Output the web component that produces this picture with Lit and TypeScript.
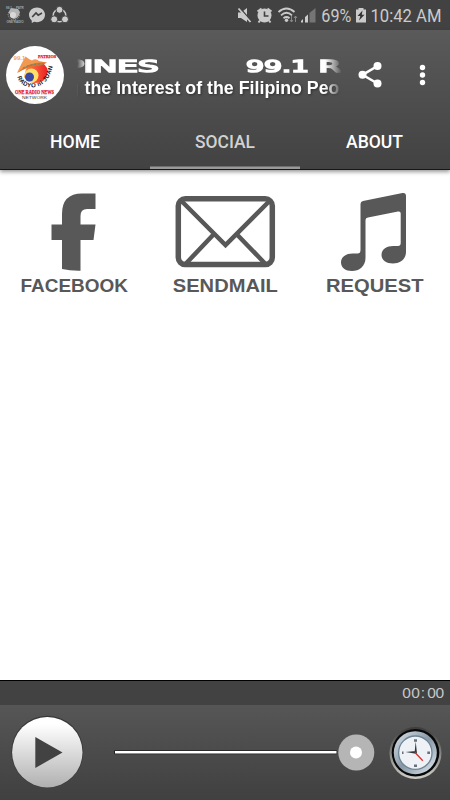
import { LitElement, html, css, svg } from "lit";
import { customElement, state } from "lit/decorators.js";
import { classMap } from "lit/directives/class-map.js";

const fitted = (cls: string, text: string, x: number, y: number, width: number) =>
  svg`<text class=${cls} x=${x} y=${y} textLength=${width} lengthAdjust="spacingAndGlyphs">${text}</text>`;

@customElement("status-bar")
class StatusBar extends LitElement {
  static styles = css`
    :host { display: block; height: 30px; background: #424242; }
    svg { display: block; }
    .label { font: 400 18.5px Roboto, sans-serif; fill: #cbcbcb; }
    .tiny { font: 700 3px "Liberation Sans", sans-serif; fill: #aaa; }
  `;
  render() {
    return html`<svg width="450" height="30" viewBox="0 0 450 30" fill="#cbcbcb">
      <g fill="#b4b4b4">
        <path d="M8 13 L11 8 L18 9 L20 12 Q19 18 14 19 Q9 18 10 14Z" />
        <circle cx="13" cy="15" r="3" fill="#d8d8d8" />
        <path d="M8 14 Q9 20 14 20 Q19 19 20 14" fill="none" stroke="#999" stroke-width="1" stroke-dasharray="1.2 .8" />
        <text class="tiny" x="6" y="8.5">99.1</text><text class="tiny" x="16" y="8.5">PATR</text>
        <text class="tiny" x="6.5" y="22.5">ONE RADIO</text>
      </g>
      <path d="M37 7.5 C32.5 7.5 29 10.6 29 14.8 C29 17 30 19 31.7 20.4 L31.8 23 L34.2 21.8 C35 22 36 22.2 37 22.2 C41.5 22.2 45 19 45 14.8 C45 10.6 41.5 7.5 37 7.5Z" />
      <path d="M32.2 17 L36 13 L38.2 15.2 L42 13" fill="none" stroke="#424242" stroke-width="1.7" />
      <circle cx="59.5" cy="15.5" r="6.3" fill="none" stroke="#cbcbcb" stroke-width="1.5" />
      <g stroke="#424242" stroke-width="1">
        <circle cx="59.5" cy="9.8" r="3.5" /><circle cx="54.2" cy="19.3" r="3.5" /><circle cx="65" cy="19.3" r="3.5" />
      </g>
      <path d="M238 12.5 H241 L247 8 V22 L241 18 H238Z" />
      <path d="M240 8 L251.500 21.5" stroke="#424242" stroke-width="1.500" />
      <path d="M238.5 8.5 L250.5 22" stroke="#cbcbcb" stroke-width="1.8" />
      <circle cx="264.5" cy="15.5" r="7" />
      <path d="M257.5 11.5 L261.5 8.5 M267.5 8.5 L271.5 11.5 M260 20.5 L258.5 22.5 M269 20.5 L270.5 22.5" stroke="#cbcbcb" stroke-width="2" />
      <path d="M264.5 11.5 V16 H268.5" fill="none" stroke="#424242" stroke-width="1.6" />
      <g fill="none" stroke="#cbcbcb" stroke-width="1.8">
        <path d="M278.5 12 Q286.5 5 294.5 12" /><path d="M281 15.3 Q286.5 10.3 292 15.3" /><path d="M283.5 18.3 Q286.5 15.8 289.5 18.3" />
      </g>
      <circle cx="286.5" cy="20.3" r="1.7" />
      <path d="M291.500 16 V22 M290 20 L291.500 22 L293 20 M295.5 22 V16 M294 18 L295.5 16 L297 18" fill="none" stroke="#888" stroke-width="1" />
      <path d="M301 22.5 V21 L303 19 V22.5Z M305 22.5 V17 L308 14.5 V22.5Z" />
      <path d="M309.5 22.5 V13 L315.5 8 V22.5Z" fill="#757575" />
      ${fitted("label", "69%", 321.3, 22, 30)}
      <path d="M358.5 8 H363.5 V9.5 H366 V22.5 H356 V9.5 H358.5Z" />
      <path d="M362.5 10.5 L357.5 16 H360.3 L359 20.5 L364.5 14.8 H361.8Z" fill="#333" />
      ${fitted("label", "10:42 AM", 370.5, 22, 71)}
    </svg>`;
  }
}

@customElement("station-logo")
class StationLogo extends LitElement {
  static styles = css`
    :host { display: block; width: 58px; height: 58px; }
    svg { display: block; }
    .serif { font: 700 6px "Liberation Serif", serif; fill: #e3182d; stroke: #e3182d; stroke-width: .25; }
    .small { font-size: 4.5px; }
    .freq { font: 700 5.5px "Liberation Sans", sans-serif; fill: #f3a45f; }
    .net { font: 400 4px "Liberation Sans", sans-serif; fill: #333; }
    .arc { font: 700 6px "Liberation Sans", sans-serif; fill: #111; }
  `;
  render() {
    return html`<svg width="58" height="58" viewBox="6 46 58 58">
      <defs>
        <path id="ring" d="M17.5 76.5 C21 93 51 93 53 62" />
        <linearGradient id="red" x1="0" x2="1"><stop stop-color="#ff8b49" /><stop offset="1" stop-color="#ed2024" /></linearGradient>
      </defs>
      <circle cx="35" cy="75" r="29" fill="#fff" />
      <path d="M26 69 Q30 61 44 64 Q51 71 45 79 Q42 83 35 83 Q27 82 24 77Z" fill="url(#red)" />
      <path d="M17 73 Q21 64 25.5 56.5 Q30 60 32 60.5 Q36 58 39 61 L46.5 62.5 Q33 64 17 73Z" fill="#f29850" />
      <path d="M17 73 Q29 61 47 62.5 Q42 66 36 66 Q26 67 17 73Z" fill="#d8752d" />
      <path d="M23 68 Q31 63.500 43 64" fill="none" stroke="#4b8d87" stroke-width="1" stroke-dasharray="2 2" />
      <circle cx="31.5" cy="75.5" r="7" fill="#ffe168" />
      <circle cx="29.500" cy="77" r="4.5" fill="#3949a3" />
      <text class="freq" x="13.5" y="59.5" textLength="12" lengthAdjust="spacingAndGlyphs">99.1</text>
      <text class="serif small" x="38" y="57.5" textLength="18" lengthAdjust="spacingAndGlyphs">PATRIOS</text>
      <text class="arc"><textPath href="#ring" textLength="52">RADYO ni JUAN</textPath></text>
      <text class="serif" x="15" y="94" textLength="39" lengthAdjust="spacingAndGlyphs">ONE RADIO NEWS</text>
      <text class="net" x="22" y="98.8" textLength="25" lengthAdjust="spacingAndGlyphs">NETWORK</text>
    </svg>`;
  }
}

@customElement("app-header")
class AppHeader extends LitElement {
  @state() private active = "SOCIAL";
  static styles = css`
    :host { display: flex; flex-direction: column; box-sizing: border-box; height: 140px; background: linear-gradient(#5a5a5a, #424242); border-bottom: 1px solid #171717; box-shadow: 0 2px 4px #0006; position: relative; }
    .top { display: flex; align-items: flex-start; height: 83px; }
    station-logo { margin: 16px 13px 0 6px; flex: none; }
    svg { display: block; flex: none; }
    .ticker { margin-top: 20px; -webkit-mask-image: linear-gradient(90deg, transparent, #000 10px, #000 248px, transparent 265px); mask-image: linear-gradient(90deg, transparent, #000 10px, #000 248px, transparent 265px); }
    .wide { font: 400 16.5px "DejaVu Sans", sans-serif; fill: #fff; stroke: #fff; stroke-width: 1.6; }
    .line { font: 700 17.5px "Liberation Sans", sans-serif; fill: #fff; filter: drop-shadow(1px 1px 1px #0006); }
    .actions { margin-top: 25px; }
    .tabs { display: grid; grid-template-columns: repeat(3, 1fr); height: 56px; flex: none; }
    .tab { border: 0; padding: 0; background: none; }
    .tab.on { box-shadow: inset 0 -2.5px #999; }
    .name { font: 500 18px Roboto, sans-serif; fill: #fff; }
    .on .name { fill: #d2d2d2; }
  `;
  render() {
    const tabs: [string, number, number][] = [["HOME", 50, 50], ["SOCIAL", 45, 60], ["ABOUT", 46, 57]];
    return html`<div class="top">
        <station-logo></station-logo>
        <svg class="ticker" width="264" height="52" viewBox="77 50 264 52">
          ${fitted("wide", "P", 66, 71.5, 18)}${fitted("wide", "INES", 83.5, 71.5, 75)}
          ${fitted("wide", "99.1", 246, 71.5, 63)}${fitted("wide", "R", 318.5, 71.5, 23)}
          ${fitted("line", "g", 69, 94, 10)}${fitted("line", "the Interest of the Filipino Peo", 84.5, 94, 255)}
        </svg>
        <svg class="actions" width="109" height="40" viewBox="341 55 109 40" fill="#fff">
          <path d="M377.5 66 L362.5 74.8 L377.5 83.5" fill="none" stroke="#fff" stroke-width="2.5" />
          <circle cx="377.5" cy="66" r="4" /><circle cx="362.5" cy="74.8" r="4" /><circle cx="377.5" cy="83.5" r="4" />
          <circle cx="422.5" cy="67.5" r="2.7" /><circle cx="422.5" cy="75" r="2.7" /><circle cx="422.5" cy="82.5" r="2.7" />
        </svg>
      </div>
      <div class="tabs">${tabs.map(([name, x, w]) => html`<button class=${classMap({ tab: true, on: name === this.active })} @click=${() => (this.active = name)}>
        <svg width="150" height="56" viewBox="0 0 150 56">${fitted("name", name, x, 34.5, w)}</svg></button>`)}</div>`;
  }
}

@customElement("social-grid")
class SocialGrid extends LitElement {
  static styles = css`
    :host { display: grid; grid-template-columns: repeat(3, 150px); align-content: start; flex: 1; padding-top: 10px; background: #fff; }
    svg { display: block; }
    .caption { font: 700 19px "Liberation Sans", sans-serif; fill: #585858; stroke: none; }
  `;
  render() {
    return html`
      <svg width="150" height="125" viewBox="0 0 150 125" fill="#585858">
        <path d="M95.5 13.5 V29 H87 Q80.5 29 80.5 36 V44.5 H95.5 L93.5 60 H80.5 V90.8 Q70 91 62 89 V60 H51.5 V44.5 H62 V34 Q62 13.5 82 13.5Z" />
        ${fitted("caption", "FACEBOOK", 20.5, 112, 107.5)}
      </svg>
      <svg width="150" height="125" viewBox="0 0 150 125" fill="none" stroke="#585858">
        <rect x="28.3" y="18.8" width="94" height="65.8" rx="7" stroke-width="5.5" />
        <path d="M31 20.5 L75.5 65 L120 20.5 M35.500 84 L64 54 M115.500 84 L86.5 54" stroke-width="4.5" />
        ${fitted("caption", "SENDMAIL", 22.8, 112, 105)}
      </svg>
      <svg width="150" height="125" viewBox="0 0 150 125" fill="#585858">
        <path d="M60.5 24 Q60.5 21.5 63 21 L102.5 13 Q106 12.5 106 16 V72 C106 80 99 83.5 93 83.5 C86.5 83.5 81.5 80 81.5 75 C81.5 69 87 66 93 66 H98 Q100.7 66 100.7 63 V33.5 Q100.7 31 98 31.5 L68 37.6 Q65.5 38 65.5 40 V78 C65.5 86.5 59 91 52 91 C45.5 91 41 87.5 41 82.5 C41 76.5 46.5 73.5 52.5 73.5 H57.5 Q60.5 73.5 60.5 70Z" />
        ${fitted("caption", "REQUEST", 26, 111.5, 97.5)}
      </svg>`;
  }
}

@customElement("player-bar")
class PlayerBar extends LitElement {
  static styles = css`
    :host { display: block; height: 120px; box-sizing: border-box; border-top: 1px solid #000; background: #424242; }
    svg { display: block; }
    .elapsed { height: 24px; }
    .controls { height: 95px; background: linear-gradient(#565656, #404040); }
    .time { font: 400 15.5px "Liberation Sans", sans-serif; fill: #c8c8c8; }
  `;
  render() {
    return html`
      <div class="elapsed"><svg width="450" height="24" viewBox="0 681 450 24">
        <text class="time" x="402.2 411.2 420.8 427.2 435.6" y="698">00:00</text>
      </svg></div>
      <div class="controls"><svg width="450" height="95" viewBox="0 705 450 95">
        <defs>
          <linearGradient id="knob" x2="0" y2="1"><stop offset=".1" stop-color="#fff" /><stop offset="1" stop-color="#b0b0b0" /></linearGradient>
          <linearGradient id="rim" x2="0" y2="1"><stop stop-color="#3a3a3a" /><stop offset="1" stop-color="#cfcfca" /></linearGradient>
          <linearGradient id="steel" x2="1" y2="1"><stop stop-color="#dce6ee" /><stop offset=".5" stop-color="#8797a5" /><stop offset="1" stop-color="#e4edf4" /></linearGradient>
        </defs>
        <circle cx="47.3" cy="751.7" r="36" fill="#383838" />
        <circle cx="47.3" cy="752.2" r="35.2" fill="url(#knob)" />
        <path d="M35.3 737 L62.5 752.5 L35.3 768Z" fill="#424242" />
        <rect x="114" y="750.3" width="223" height="4" rx="1" fill="#222" />
        <rect x="115" y="751" width="221.5" height="2.5" fill="#fff" />
        <circle cx="356.3" cy="752.5" r="18" fill="#b5b5b5" />
        <circle cx="356" cy="752.5" r="6" fill="#fff" />
        <circle cx="415.5" cy="753" r="26" fill="url(#rim)" />
        <circle cx="415.5" cy="752.7" r="23.8" fill="#080808" />
        <circle cx="415.3" cy="752.7" r="21.5" fill="url(#steel)" />
        <circle cx="415.3" cy="752.7" r="16.7" fill="#eef1f5" stroke="#708494" stroke-width="1.3" />
        <path d="M414 740.5 H417 M402 752.7 H403.5 M427.3 752.7 H430 M414 765.7 H417" stroke="#65727e" stroke-width="2.5" />
        <path d="M405.5 752 L416 751 L416 753.7Z M414.5 753.5 L415.7 741.5 L417 753.5Z" fill="#30373c" />
        <path d="M415 752.5 L422.8 760.7" stroke="#d9322b" stroke-width="1.3" />
      </svg></div>`;
  }
}

@customElement("app-root")
class AppRoot extends LitElement {
  static styles = css`
    :host { display: flex; flex-direction: column; width: 450px; height: 800px; overflow: hidden; background: #fff; }
    status-bar, app-header, player-bar { flex: none; }
    app-header { z-index: 1; }
  `;
  render() {
    return html`<status-bar></status-bar><app-header></app-header><social-grid></social-grid><player-bar></player-bar>`;
  }
}
